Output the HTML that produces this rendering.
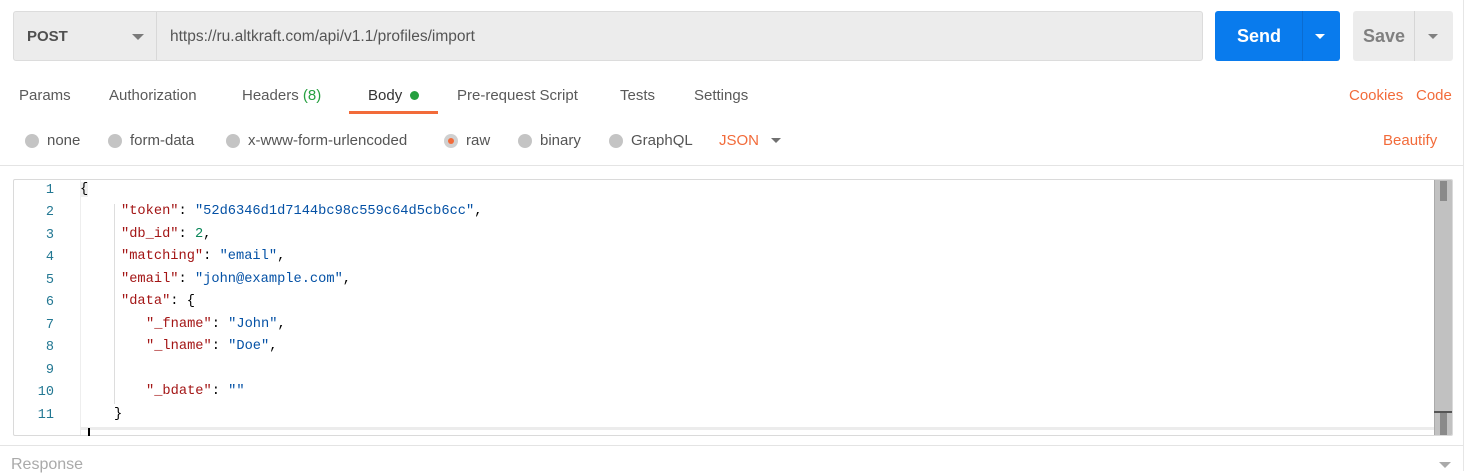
<!DOCTYPE html>
<html><head><meta charset="utf-8"><style>
*{margin:0;padding:0;box-sizing:border-box}
body{width:1465px;height:471px;background:#fff;position:relative;overflow:hidden;font-family:"Liberation Sans",sans-serif;color:#505050}
.a{position:absolute;white-space:nowrap}
.t{font-size:15px;top:87px;color:#5a5a5a}
.r{font-size:15px;top:132px;color:#555}
.dot{position:absolute;width:14px;height:14px;border-radius:50%;background:#c4c4c4;top:134px}
.o{color:#f26b3a}
.ln{position:absolute;left:14px;width:40px;text-align:right;font-family:"Liberation Mono",monospace;font-size:13.5px;color:#237893}
.c{position:absolute;font-family:"Liberation Mono",monospace;font-size:13.7px;white-space:pre;color:#000}
.k{color:#a31515}.s{color:#0451a5}.n{color:#098658}
</style></head><body>
<div class="a" style="left:1463px;top:0;width:1px;height:471px;background:#e6e6e6"></div>
<div class="a" style="left:13px;top:11px;width:1190px;height:50px;background:#ececec;border:1px solid #dcdcdc;border-radius:3px"></div>
<div class="a" style="left:156px;top:12px;width:1px;height:48px;background:#d8d8d8"></div>
<div class="a" style="left:27px;top:28px;font-size:15px;font-weight:bold;color:#505050">POST</div>
<div class="a" style="left:132px;top:34px;border-left:6px solid transparent;border-right:6px solid transparent;border-top:6px solid #7a7a7a"></div>
<div class="a" style="left:170px;top:28px;font-size:15.5px;color:#555">https://ru.altkraft.com/api/v1.1/profiles/import</div>
<div class="a" style="left:1215px;top:11px;width:125px;height:50px;background:#097bed;border-radius:3px"></div>
<div class="a" style="left:1302px;top:11px;width:1px;height:50px;background:#0b6cd0"></div>
<div class="a" style="left:1237px;top:26px;font-size:18px;font-weight:bold;color:#fff">Send</div>
<div class="a" style="left:1315px;top:34px;border-left:5px solid transparent;border-right:5px solid transparent;border-top:5px solid #fff"></div>
<div class="a" style="left:1353px;top:11px;width:100px;height:50px;background:#ececec;border-radius:3px"></div>
<div class="a" style="left:1414px;top:11px;width:1px;height:50px;background:#d6d6d6"></div>
<div class="a" style="left:1363px;top:26px;font-size:18px;font-weight:bold;color:#808080">Save</div>
<div class="a" style="left:1428px;top:34px;border-left:5px solid transparent;border-right:5px solid transparent;border-top:5px solid #808080"></div>
<div class="a t" style="left:19px">Params</div>
<div class="a t" style="left:109px">Authorization</div>
<div class="a t" style="left:242px">Headers <span style="color:#26a040">(8)</span></div>
<div class="a t" style="left:368px;color:#333">Body</div>
<div class="a" style="left:410px;top:91px;width:9px;height:9px;border-radius:50%;background:#26a040"></div>
<div class="a" style="left:349px;top:111px;width:89px;height:3px;background:#f26b3a"></div>
<div class="a t" style="left:457px">Pre-request Script</div>
<div class="a t" style="left:620px">Tests</div>
<div class="a t" style="left:694px">Settings</div>
<div class="a t o" style="left:1349px">Cookies</div>
<div class="a t o" style="left:1416px">Code</div>
<div class="dot" style="left:25px"></div><div class="a r" style="left:47px">none</div>
<div class="dot" style="left:108px"></div><div class="a r" style="left:130px">form-data</div>
<div class="dot" style="left:226px"></div><div class="a r" style="left:248px">x-www-form-urlencoded</div>
<div class="dot" style="left:444px;background:#d0d0d0"></div><div class="a" style="left:448px;top:138px;width:6px;height:6px;border-radius:50%;background:#f26b3a"></div><div class="a r" style="left:466px">raw</div>
<div class="dot" style="left:518px"></div><div class="a r" style="left:540px">binary</div>
<div class="dot" style="left:609px"></div><div class="a r" style="left:631px">GraphQL</div>
<div class="a r o" style="left:719px">JSON</div>
<div class="a" style="left:771px;top:138px;border-left:5px solid transparent;border-right:5px solid transparent;border-top:5px solid #707070"></div>
<div class="a r o" style="left:1383px">Beautify</div>
<div class="a" style="left:0;top:165px;width:1463px;height:1px;background:#e4e4e4"></div>
<div class="a" style="left:13px;top:179px;width:1440px;height:257px;border:1px solid #dadada;border-radius:2px;overflow:hidden">
 <div class="a" style="left:66px;top:0;width:1px;height:257px;background:#eee"></div>
 <div class="a" style="left:67px;top:247px;width:1354px;height:3px;background:#ececec"></div>
 <div class="a" style="left:1420px;top:0;width:18px;height:257px;background:#c1c1c1;border-left:1px solid #aaa"></div>
 <div class="a" style="left:1426px;top:1px;width:7px;height:20px;background:#8a8a8a"></div>
 <div class="a" style="left:1420px;top:231px;width:18px;height:2px;background:#555"></div>
 <div class="a" style="left:1426px;top:233px;width:7px;height:24px;background:#8a8a8a"></div>
 <div class="a" style="left:100px;top:24px;width:1px;height:200px;background:#ddd"></div>
</div>
<div class="ln" style="top:183px">1</div><div class="ln" style="top:205px">2</div><div class="ln" style="top:228px">3</div><div class="ln" style="top:250px">4</div><div class="ln" style="top:273px">5</div><div class="ln" style="top:295px">6</div><div class="ln" style="top:318px">7</div><div class="ln" style="top:340px">8</div><div class="ln" style="top:363px">9</div><div class="ln" style="top:385px">10</div><div class="ln" style="top:408px">11</div>
<div class="c" style="left:80px;top:182px;background:#eee">{</div>
<div class="c" style="left:121px;top:204px"><span class="k">"token"</span>: <span class="s">"52d6346d1d7144bc98c559c64d5cb6cc"</span>,</div>
<div class="c" style="left:121px;top:227px"><span class="k">"db_id"</span>: <span class="n">2</span>,</div>
<div class="c" style="left:121px;top:249px"><span class="k">"matching"</span>: <span class="s">"email"</span>,</div>
<div class="c" style="left:121px;top:272px"><span class="k">"email"</span>: <span class="s">"john@example.com"</span>,</div>
<div class="c" style="left:121px;top:294px"><span class="k">"data"</span>: {</div>
<div class="c" style="left:146px;top:317px"><span class="k">"_fname"</span>: <span class="s">"John"</span>,</div>
<div class="c" style="left:146px;top:339px"><span class="k">"_lname"</span>: <span class="s">"Doe"</span>,</div>
<div class="c" style="left:146px;top:384px"><span class="k">"_bdate"</span>: <span class="s">""</span></div>
<div class="c" style="left:114px;top:407px">}</div>
<div class="a" style="left:88px;top:428px;width:2px;height:8px;background:#000"></div>
<div class="a" style="left:0;top:445px;width:1463px;height:1px;background:#e4e4e4"></div>
<div class="a" style="left:11px;top:456px;font-size:16px;color:#aaa">Response</div>
<div class="a" style="left:1439px;top:462px;border-left:6px solid transparent;border-right:6px solid transparent;border-top:6px solid #aaa"></div>
</body></html>
